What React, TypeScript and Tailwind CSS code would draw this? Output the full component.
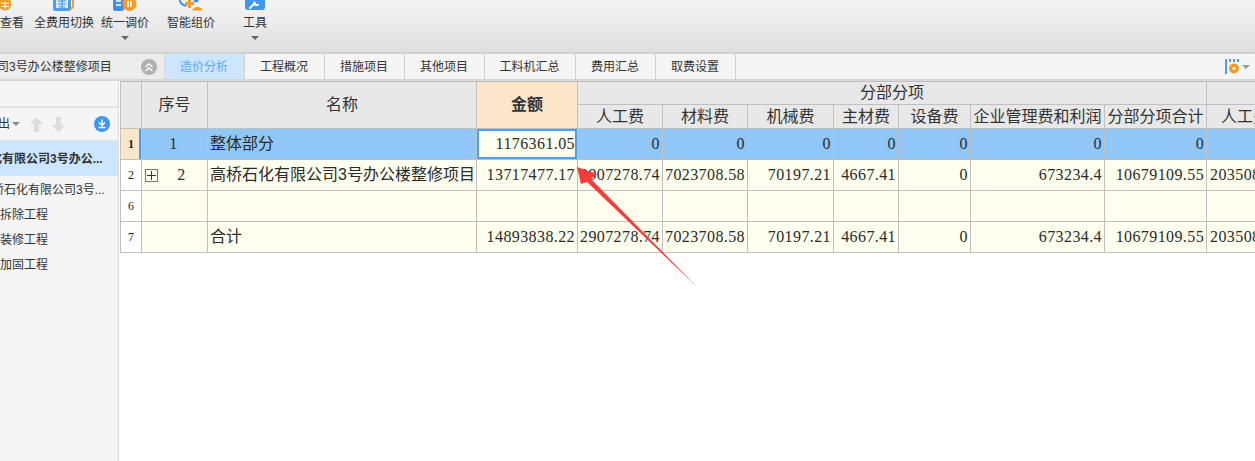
const cjk = "font-['Liberation_Sans','Noto_Sans_CJK_SC',sans-serif]";
const num = "font-['Liberation_Serif','Noto_Sans_CJK_SC',serif] text-[16px] tracking-[0.4px] pr-[2px]";

const tabs = [
  { label: "造价分析", w: "w-[80px]", active: true },
  { label: "工程概况", w: "w-[80px]" },
  { label: "措施项目", w: "w-[80px]" },
  { label: "其他项目", w: "w-[80px]" },
  { label: "工料机汇总", w: "w-[91px]" },
  { label: "费用汇总", w: "w-[80px]" },
  { label: "取费设置", w: "w-[80px]" },
];

const colWidths = [21, 66, 269, 101, 85, 85, 86, 65, 72, 134, 102, 110];
const subHeads = ["人工费", "材料费", "机械费", "主材费", "设备费", "企业管理费和利润", "分部分项合计"];
const row2 = ["2907278.74", "7023708.58", "70197.21", "4667.41", "0", "673234.4", "10679109.55", "203508"];

function Caret({ className = "" }: { className?: string }) {
  return <span className={`block w-0 h-0 border-x-[4px] border-x-transparent border-t-[4px] border-t-[#666] ${className}`} />;
}

function ToolIcon({ name }: { name: string }) {
  if (name === "view")
    return (
      <svg className="mr-[12px]" width="12" height="12" viewBox="0 0 12 12">
        <circle cx="5" cy="4" r="6.5" fill="#f59a23" />
        <path d="M1 3h8M1 6.5h8M5 3v6" stroke="#fff" strokeWidth="1.2" />
      </svg>
    );
  if (name === "switch")
    return (
      <svg width="22" height="12" viewBox="0 0 22 12">
        <rect x="0" y="-6" width="18" height="17" rx="2" fill="#4a9df0" />
        <rect x="3" y="-3" width="12" height="11" fill="#d5e9fb" />
        <path d="M5 1h8M5 4h8M9 0v7M6 7h6" stroke="#3c8fe6" strokeWidth="1" />
        <path d="M20 0v4a4 4 0 0 1-3 5" stroke="#f59a23" strokeWidth="2" fill="none" />
      </svg>
    );
  if (name === "price")
    return (
      <svg width="24" height="12" viewBox="0 0 24 12">
        <rect x="0" y="-5" width="11" height="16" rx="2" fill="#3f8fe8" />
        <path d="M3 1h5M3 5h5" stroke="#fff" strokeWidth="1.4" />
        <circle cx="16.5" cy="4" r="7" fill="#f59a23" />
        <path d="M15 1v6M18 1v6" stroke="#fff" strokeWidth="1.6" />
      </svg>
    );
  if (name === "smart")
    return (
      <svg width="25" height="11" viewBox="0 0 25 11">
        <path d="M0.5 0a9 9 0 0 0 7 6" stroke="#3f8fe8" strokeWidth="2" fill="none" />
        <path d="M9 0h3v2h3v3h-3v3H9V5H6V2h3z" fill="#f59a23" />
        <path d="M13 10.5a6 6 0 0 1 11 0z" fill="#f59a23" />
        <circle cx="17" cy="0" r="2.5" fill="#3f8fe8" />
      </svg>
    );
  return (
    <svg width="20" height="11" viewBox="0 0 20 11">
      <rect x="0" y="-8" width="20" height="18" rx="3" fill="#3f97f0" />
      <path d="M5 8l5-5M9 2.5a2.6 2.6 0 0 0 4 2.2" stroke="#fff" strokeWidth="2" fill="none" strokeLinecap="round" />
    </svg>
  );
}

function ToolButton({ icon, label, w, caret }: { icon: string; label: string; w: string; caret?: boolean }) {
  return (
    <div className={`flex flex-col items-center shrink-0 ${w}`}>
      <div className="h-[12px] flex items-start justify-center">
        <ToolIcon name={icon} />
      </div>
      <div className="mt-[3px] text-[12px] leading-[16px] text-[#333] whitespace-nowrap">{label}</div>
      {caret && <Caret className="mt-[5px] border-t-[#666]" />}
    </div>
  );
}

function Toolbar() {
  return (
    <div className="h-[54px] flex items-start bg-gradient-to-b from-[#f4f4f4] to-[#dfdfdf] border-b-2 border-[#d2d2d2] overflow-hidden">
      <div className="flex">
        <ToolButton icon="view" label="查看" w="w-[24px]" />
        <div className="ml-[10px]"><ToolButton icon="switch" label="全费用切换" w="w-[60px]" /></div>
        <div className="ml-[7px]"><ToolButton icon="price" label="统一调价" w="w-[48px]" caret /></div>
        <div className="ml-[18px]"><ToolButton icon="smart" label="智能组价" w="w-[48px]" /></div>
        <div className="ml-[28px]"><ToolButton icon="tool" label="工具" w="w-[24px]" caret /></div>
      </div>
    </div>
  );
}

function TabBar() {
  return (
    <div className="h-[27px] flex bg-[#f5f5f5] border-b-2 border-[#d8d8d8]">
      <div className="w-[165px] shrink-0 flex items-center bg-[#ececec] border-r border-[#d8d8d8] overflow-hidden">
        <span className="ml-[-3px] w-[144px] shrink-0 text-[12px] text-[#333] whitespace-nowrap">司3号办公楼整修项目</span>
        <span className="w-[16px] h-[16px] rounded-full bg-[#b0b0b0] flex items-center justify-center shrink-0">
          <svg width="10" height="10" viewBox="0 0 10 10">
            <path d="M1.5 5l3.5-3 3.5 3M1.5 9l3.5-3 3.5 3" stroke="#fff" strokeWidth="1.4" fill="none" />
          </svg>
        </span>
      </div>
      {tabs.map((t) => (
        <div
          key={t.label}
          className={`${t.w} shrink-0 pr-[1px] flex items-center justify-center text-[12px] border-r border-[#d0d0d0] ${
            t.active ? "bg-[#cce6ff] text-[#5aa9f5]" : "text-[#333]"
          }`}
        >
          {t.label}
        </div>
      ))}
      <div className="flex-1 flex items-center justify-end pr-[5px] gap-[2px]">
        <svg width="15" height="15" viewBox="0 0 15 15">
          <rect x="0" y="0" width="2" height="15" fill="#4a9df0" />
          <path d="M4 0h2v3H4zM8 0h2v3H8zM12 0h2v3h-2z" fill="#4a9df0" />
          <circle cx="9" cy="9.5" r="5" fill="#f59a23" />
          <circle cx="9" cy="9.5" r="1.6" fill="#fff" />
        </svg>
        <Caret className="border-t-[#999]" />
      </div>
    </div>
  );
}

function Sidebar() {
  return (
    <div className="w-[119px] shrink-0 bg-[#f5f5f5] border-r border-[#dcdcdc] overflow-hidden">
      <div className="h-[27px] border-b-2 border-[#e2e2e2]" />
      <div className="h-[33px] flex items-center border-b border-[#e2e2e2]">
        <span className="text-[12px] text-[#333] ml-[-2px] w-[13px]">出</span>
        <Caret className="ml-[1px] border-t-[#888]" />
        <svg className="ml-[10px]" width="13" height="15" viewBox="0 0 13 15">
          <path d="M6.5 0L13 7H9v8H4V7H0z" fill="#dcdcdc" />
        </svg>
        <svg className="ml-[9px]" width="13" height="15" viewBox="0 0 13 15">
          <path d="M6.5 15L13 8H9V0H4v8H0z" fill="#dcdcdc" />
        </svg>
        <svg className="ml-[29px]" width="16" height="16" viewBox="0 0 16 16">
          <circle cx="8" cy="8" r="8" fill="#3f97f0" />
          <path d="M8 3.5v5.5M5 6.5L8 9.5l3-3M4.5 11.5h7" stroke="#fff" strokeWidth="1.4" fill="none" />
        </svg>
      </div>
      <div className="h-[35px] flex items-center bg-[#cce6ff] text-[12px] font-bold text-[#333] whitespace-nowrap overflow-hidden">
        <span className="ml-[-10px]">化有限公司3号办公...</span>
      </div>
      <div className="text-[12px] text-[#333] whitespace-nowrap">
        <div className="h-[25px] mt-[1px] flex items-center"><span className="ml-[-8px]">桥石化有限公司3号...</span></div>
        <div className="h-[25px] flex items-center">拆除工程</div>
        <div className="h-[25px] flex items-center">装修工程</div>
        <div className="h-[25px] flex items-center">加固工程</div>
      </div>
    </div>
  );
}

function SheetTable() {
  const line = "border border-[#c0c0c0]";
  const head = `${line} bg-[#e8e8e8] font-normal text-[16px] leading-[20px] text-[#333] whitespace-nowrap overflow-hidden p-0`;
  const body = `${line} h-[31px] p-0 text-[#2a2a2a] leading-[20px] overflow-hidden whitespace-nowrap`;
  const idx = `${line} w-[21px] p-0 text-center font-['Liberation_Serif',serif] text-[12px] leading-[20px] text-[#222]`;
  const cream = "bg-[#fffff0]";
  const blue = "bg-[#90c7f8]";

  const sumRow = ["14893838.22", ...row2];

  return (
    <table className="table-fixed border-collapse w-[1196px] ml-[1px] text-[16px]">
      <colgroup>
        {colWidths.map((w, i) => (
          <col key={i} style={{ width: w }} />
        ))}
      </colgroup>
      <thead>
        <tr className="h-[23px]">
          <th rowSpan={2} className={head} />
          <th rowSpan={2} className={head}>序号</th>
          <th rowSpan={2} className={head}>名称</th>
          <th rowSpan={2} className={`${line} bg-[#fde5c9] font-bold text-[16px] leading-[20px] text-[#333] p-0`}>金额</th>
          <th colSpan={7} className={head}>分部分项</th>
          <th className={head} />
        </tr>
        <tr className="h-[24px]">
          {subHeads.map((h) => (
            <th key={h} className={head}>{h}</th>
          ))}
          <th className={`${head} text-left pl-[14px]`}>人工费</th>
        </tr>
      </thead>
      <tbody>
        <tr>
          <td className={`${idx} bg-[#fde5c9] font-bold shadow-[inset_-2px_0_0_#4a9ef5]`}>1</td>
          <td className={`${body} ${blue} text-center ${num}`}>1</td>
          <td className={`${body} ${blue} pl-[2px]`}>整体部分</td>
          <td className={`${body} ${cream} ${num} text-right shadow-[inset_0_0_0_2px_#4a9ef5]`}>1176361.05</td>
          {Array.from({ length: 7 }).map((_, i) => (
            <td key={i} className={`${body} ${blue} ${num} text-right`}>0</td>
          ))}
          <td className={`${body} ${blue}`} />
        </tr>
        <tr>
          <td className={`${idx} bg-white`}>2</td>
          <td className={`${body} ${cream}`}>
            <div className="flex items-center pl-[3px]">
              <span className="w-[13px] h-[13px] border border-[#777] flex items-center justify-center shrink-0">
                <svg width="9" height="9" viewBox="0 0 9 9">
                  <path d="M0 4.5h9M4.5 0v9" stroke="#333" strokeWidth="1" />
                </svg>
              </span>
              <span className={`flex-1 text-center ${num}`}>2</span>
            </div>
          </td>
          <td className={`${body} ${cream} pl-[2px]`}>高桥石化有限公司3号办公楼整修项目</td>
          <td className={`${body} ${cream} ${num} text-right`}>13717477.17</td>
          {row2.map((v, i) => (
            <td key={i} className={`${body} ${cream} ${num} ${i === 7 ? "text-left pl-[3px]" : "text-right"}`}>{v}</td>
          ))}
        </tr>
        <tr>
          <td className={`${idx} bg-white`}>6</td>
          {Array.from({ length: 11 }).map((_, i) => (
            <td key={i} className={`${body} ${cream}`} />
          ))}
        </tr>
        <tr>
          <td className={`${idx} bg-white`}>7</td>
          <td className={`${body} ${cream}`} />
          <td className={`${body} ${cream} pl-[2px]`}>合计</td>
          {sumRow.map((v, i) => (
            <td key={i} className={`${body} ${cream} ${num} ${i === 8 ? "text-left pl-[3px]" : "text-right"}`}>{v}</td>
          ))}
        </tr>
      </tbody>
    </table>
  );
}

export default function App() {
  return (
    <div className={`relative w-[1255px] h-[461px] overflow-hidden bg-white ${cjk}`}>
      <Toolbar />
      <TabBar />
      <div className="flex h-[380px]">
        <Sidebar />
        <div className="flex-1 overflow-hidden">
          <SheetTable />
        </div>
      </div>
      {/* red annotation arrow on top of the sheet */}
      <svg className="absolute left-0 top-0 pointer-events-none" width="1255" height="461" viewBox="0 0 1255 461">
        <polygon points="577,167 597,174 591,179 697,287 587,182 581,184" fill="#f73c3c" />
      </svg>
    </div>
  );
}
